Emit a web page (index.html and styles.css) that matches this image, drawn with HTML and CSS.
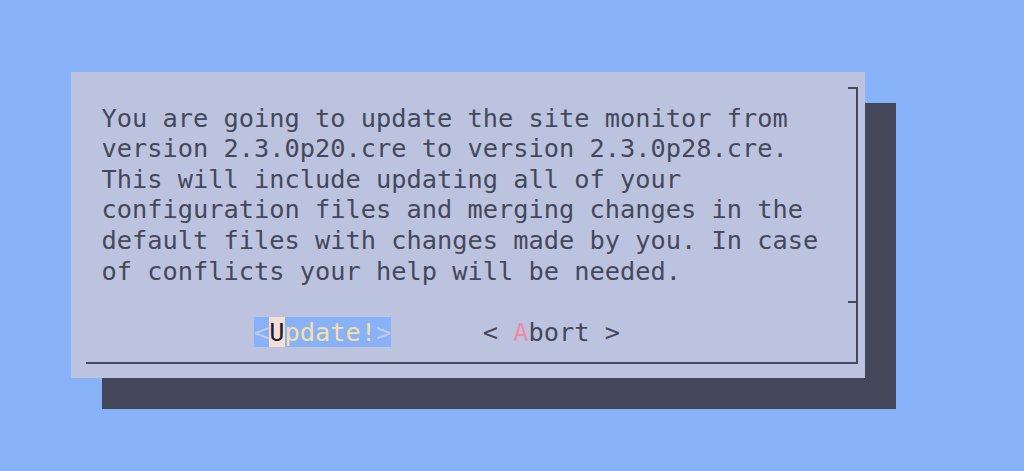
FILE: index.html
```html
<!DOCTYPE html>
<html>
<head>
<meta charset="utf-8">
<link rel="stylesheet" href="styles.css">
</head>
<body>
<div class="screen">
  <div class="dialog">
    <div class="frame">
      <div class="msg">You are going to update the site monitor from
version 2.3.0p20.cre to version 2.3.0p28.cre.
This will include updating all of your
configuration files and merging changes in the
default files with changes made by you. In case
of conflicts your help will be needed.</div>
      <div class="buttons"><span class="gap">          </span><span class="btn active"><span class="br">&lt;</span><span class="cursor">U</span><span class="lbl">pdate!</span><span class="br">&gt;</span></span><span class="gap">      </span><span class="btn">&lt; <span class="hot">A</span>bort &gt;</span></div>
    </div>
  </div>
</div>
</body>
</html>
```

FILE: styles.css
```css
html, body {
  margin: 0;
  padding: 0;
  background: #87b2f8;
}
.screen {
  width: 1024px;
  height: 471px;
  padding: 72px 0 0 71px;
  box-sizing: border-box;
  font-family: "DejaVu Sans Mono", "Liberation Mono", monospace;
  font-size: 25.33px;
  color: #45485b;
}
.dialog {
  width: 794px;
  height: 306px;
  background: #bcc3df;
  box-shadow: 31px 31px 0 #44475a;
  padding: 15px 7px 0 15px;
  box-sizing: border-box;
}
.frame {
  position: relative;
  height: 277px;
  border-right: 2px solid #45485b;
  border-bottom: 2px solid #45485b;
  box-sizing: border-box;
  padding: 15.6px 0 0 15.5px;
}
.frame::before {
  content: "";
  position: absolute;
  top: 0;
  right: 0;
  width: 8px;
  height: 2px;
  background: #45485b;
}
.frame::after {
  content: "";
  position: absolute;
  top: 213.5px;
  right: 0;
  width: 8px;
  height: 2px;
  background: #45485b;
}
.msg {
  white-space: pre;
  line-height: 30.6px;
}
.buttons {
  white-space: pre;
  line-height: 30.6px;
  height: 30.6px;
  margin-top: 30.6px;
}
.btn {
  display: inline-block;
  height: 30.6px;
  line-height: 30.6px;
}
.btn.active {
  background: #88b1f8;
}
.br {
  color: #c3cbea;
}
.lbl {
  color: #f6dfa4;
}
.cursor {
  background: #f5ddd8;
  color: #1d1d28;
}
.hot {
  color: #ef88a3;
}
```
